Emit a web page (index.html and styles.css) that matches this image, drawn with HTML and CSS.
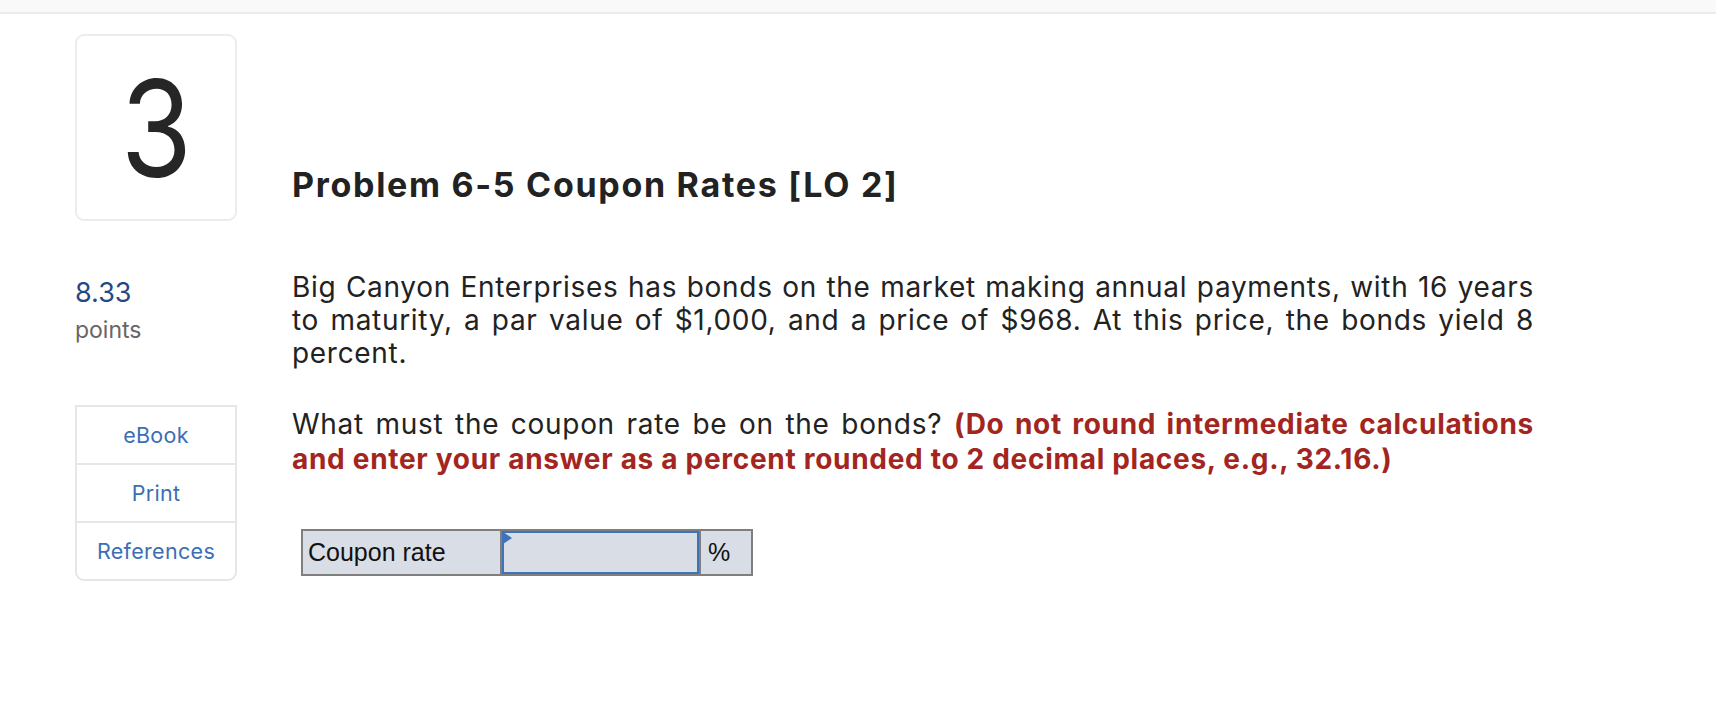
FILE: index.html
```html
<!DOCTYPE html>
<html lang="en">
<head>
<meta charset="utf-8">
<title>Problem 6-5 Coupon Rates</title>
<link rel="stylesheet" href="styles.css">
</head>
<body>
<div class="topbar"></div>
<main class="question">
  <div class="num-box"><span class="num">3</span></div>
  <h1 class="title">Problem 6-5 Coupon Rates [LO 2]</h1>
  <aside class="side">
    <div class="points-value">8.33</div>
    <div class="points-label">points</div>
    <nav class="tools">
      <a class="tool" href="#">eBook</a>
      <a class="tool" href="#">Print</a>
      <a class="tool" href="#">References</a>
    </nav>
  </aside>
  <section class="content">
    <p class="para para-first">Big Canyon Enterprises has bonds on the market making annual payments, with 16 years to maturity, a par value of $1,000, and a price of $968. At this price, the bonds yield 8 percent.</p>
    <p class="para para-second">What must the coupon rate be on the bonds? <strong class="hint">(Do not round intermediate calculations</strong> <strong class="hint">and enter your answer as a percent rounded to 2 decimal places, e.g., 32.16.)</strong></p>
    <div class="answer">
      <div class="answer-label">Coupon rate</div>
      <div class="answer-field"><input class="answer-input" type="text" aria-label="Coupon rate"></div>
      <div class="answer-unit">%</div>
    </div>
  </section>
</main>
</body>
</html>
```
FILE: styles.css
```css
body {
  margin: 0;
  background: #ffffff;
  font-family: "Inter", "Liberation Sans", sans-serif;
  color: #222222;
}

.topbar {
  height: 12px;
  background: #f9f9f9;
  border-bottom: 2px solid #ececec;
}

.question {
  display: grid;
  grid-template-columns: 162px 1242px;
  column-gap: 55px;
  padding-left: 75px;
  margin-top: 20px;
}

.num-box {
  box-sizing: border-box;
  height: 187px;
  border: 2px solid #ececec;
  border-radius: 9px;
  display: flex;
  align-items: center;
  justify-content: center;
}

.num {
  font-size: 134px;
  font-weight: 400;
  line-height: 1;
  color: #262626;
  display: inline-block;
  transform: scaleX(0.86);
}

.title {
  align-self: end;
  margin: 0 0 16px;
  font-size: 34px;
  line-height: 40px;
  font-weight: 700;
  letter-spacing: 1.7px;
  color: #222222;
}

.side {
  padding-top: 56px;
}

.points-value {
  font-size: 27px;
  line-height: 32px;
  color: #1f4a87;
}

.points-label {
  margin-top: 8px;
  font-size: 23px;
  line-height: 26px;
  color: #666666;
}

.tools {
  margin-top: 62px;
  border: 2px solid #e6e6e6;
  border-radius: 0 0 9px 9px;
  display: flex;
  flex-direction: column;
}

.tool {
  height: 56px;
  display: flex;
  align-items: center;
  justify-content: center;
  font-size: 21.5px;
  letter-spacing: 0.3px;
  color: #3c6eb4;
  text-decoration: none;
}

.tool + .tool {
  border-top: 2px solid #e6e6e6;
}

.para {
  margin: 0;
  font-size: 28px;
  letter-spacing: 0.7px;
  text-align: justify;
  color: #222222;
}

.para-first {
  margin-top: 50px;
  line-height: 33px;
}

.para-second {
  margin-top: 37px;
  line-height: 35px;
}

.hint {
  font-weight: 700;
  color: #a32520;
}

.answer {
  display: flex;
  width: max-content;
  box-sizing: border-box;
  height: 47px;
  margin: 52px 0 0 9px;
  border: 2px solid #7f7f7f;
  background: #d9dde5;
  font-family: "Liberation Sans", Arial, sans-serif;
  font-size: 25px;
  line-height: 43px;
  color: #111111;
}

.answer-label {
  width: 197px;
  box-sizing: border-box;
  padding-left: 5px;
}

.answer-field {
  position: relative;
  width: 197px;
  border-left: 2px solid #7f7f7f;
  border-right: 2px solid #7f7f7f;
}

.answer-field::before {
  content: "";
  position: absolute;
  left: 1px;
  top: 1px;
  width: 0;
  height: 0;
  border-left: 9px solid #3f72b8;
  border-top: 6px solid transparent;
  border-bottom: 6px solid transparent;
}

.answer-input {
  display: block;
  box-sizing: border-box;
  width: 100%;
  height: 100%;
  margin: 0;
  padding: 0 6px;
  border: 2px solid #3f72b8;
  background: #d9dde5;
  font: inherit;
  outline: none;
}

.answer-unit {
  width: 50px;
  box-sizing: border-box;
  padding-left: 7px;
}
```
